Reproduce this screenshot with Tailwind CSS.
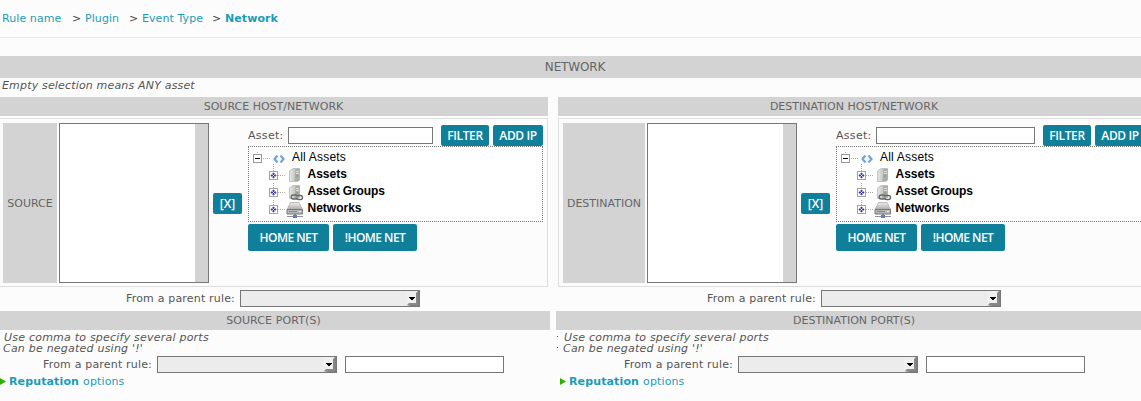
<!DOCTYPE html>
<html lang="en">
<head>
<meta charset="utf-8">
<title>Network</title>
<script src="https://cdn.jsdelivr.net/npm/@tailwindcss/browser@4"></script>
</head>
<body class="w-[1141px] h-[401px] overflow-hidden bg-[#fcfcfc] text-[#555] font-['DejaVu_Sans',sans-serif] text-[11px] leading-[11px]">
<svg class="absolute size-0">
  <defs>
    <linearGradient id="metal" x1="0" x2="1" y1="0" y2="0"><stop offset="0" stop-color="#e8e8e6"/><stop offset="1" stop-color="#a8aaa6"/></linearGradient>
    <linearGradient id="lid" x1="0" x2="0" y1="0" y2="1"><stop offset="0" stop-color="#eee"/><stop offset="1" stop-color="#aaa"/></linearGradient>
    <symbol id="root" viewBox="0 0 42 17">
      <path d="M8.500 3v2M14 9.500h7M24.500 15v2" stroke="#aaa" stroke-dasharray="1 1" fill="none"/>
      <rect x="4.500" y="5.500" width="8" height="8" fill="#fff" stroke="#9a9a8c"/>
      <path d="M6 9.500h5" stroke="#000"/>
      <path d="M28.500 6.500L25.500 10L28.500 13.500M31.500 6.500L34.500 10L31.500 13.500" stroke="#6fa6e0" stroke-width="2.200" fill="none"/>
    </symbol>
    <symbol id="plus" viewBox="0 0 58 17">
      <path d="M24.500 0v5M29 9.500h7" stroke="#aaa" stroke-dasharray="1 1" fill="none"/>
      <rect x="20.500" y="5.500" width="8" height="8" fill="#fff" stroke="#a5a59b"/>
      <path d="M24.500 6.500L27.500 9.500L24.500 12.500L21.500 9.500Z" fill="#3b34b0"/><rect x="24" y="9" width="1" height="1" fill="#fff"/><path d="M23.500 8v1M25.500 8v1M23.500 10v1M25.500 10v1" stroke="#b5b2e4"/>
    </symbol>
    <symbol id="server" viewBox="0 0 16 17">
      <path d="M1.500 5L5 2.500H11.500V14L9.500 15.500H1.500Z" fill="url(#metal)" stroke="#b8b8b4" stroke-width=".8"/>
      <path d="M6 4.500L7.500 3V14.500L6 15.500Z" fill="#c9cbc7"/><path d="M7.500 3H11.500V14L10 15H6.500Z" fill="#a9aca7"/>
      <path d="M8 5.500h3M8 7.500h3" stroke="#dededa"/><rect x="8.500" y="9" width="1.500" height="2" fill="#6fae6c"/>
    </symbol>
    <symbol id="chain" viewBox="0 0 16 17">
      <g fill="none" stroke="#666" stroke-width="1.400"><rect x="3.200" y="11" width="6" height="4" rx="2"/><rect x="8.500" y="11.500" width="6" height="4" rx="2"/><path d="M6.500 13.200h5" stroke="#aaa"/></g>
    </symbol>
    <symbol id="netdrive" viewBox="0 0 18 19">
      <path d="M4.500 2.500H13L16.500 9.500H1Z" fill="url(#lid)" stroke="#bbb"/>
      <path d="M1 9.500h15.500V14H1Z" fill="#b8b8b8" stroke="#777"/>
      <path d="M3 11.500h8" stroke="#888"/><path d="M13 11.500h2" stroke="#eee"/>
      <path d="M1 16.500h16" stroke="#8b93a2"/><path d="M9 14v2" stroke="#555"/><rect x="7" y="15" width="4" height="3" fill="#5c80c8"/>
    </symbol>
    <symbol id="arrow" viewBox="0 0 13 15">
      <path d="M0 0h13v15h-13Z" fill="#808080"/><path d="M0 0h12L10 13L0 15Z" fill="#efefef"/><path d="M10 2L12 0V14H1L3 12H10Z" fill="#888"/>
      <path d="M3 6h6v1h-1v1h-1v1h-2v-1h-1v-1h-1Z" fill="#000"/>
    </symbol>
  </defs>
</svg>

<nav class="flex h-[38px] items-center border-b border-[#e8e8e8] pl-[2px] text-[#1b9cb5] whitespace-nowrap tracking-[0.08px]">
  <a class="w-[70px]">Rule name</a><span class="w-[13px] text-[#444]">&gt;</span>
  <a class="w-[44px]">Plugin</a><span class="w-[13px] text-[#444]">&gt;</span>
  <a class="w-[70px]">Event Type</a><span class="w-[13px] text-[#444]">&gt;</span>
  <a class="font-bold">Network</a>
</nav>
<h1 class="mt-[18px] flex h-[22px] w-[1150px] items-center justify-center bg-[#d3d3d3] text-[12px] tracking-[-0.15px] text-[#666]">NETWORK</h1>
<p class="flex h-[19px] items-center pl-[2px] pb-[5px] italic tracking-[0.17px]">Empty selection means ANY asset</p>

<div class="flex w-[1150px] gap-[10px]">
  <section class="w-[548px]">
    <h2 class="flex h-[19px] items-center justify-center bg-[#d3d3d3] pr-px text-[#666]">SOURCE HOST/NETWORK</h2>
    <div class="mt-[2px] flex h-[169px] border border-l-0 border-[#ddd] pl-[3px] pt-1">
      <div class="flex h-[160px] w-[54px] items-center justify-center bg-[#d3d3d3] text-[#666]">SOURCE</div>
      <div class="ml-[2px] flex h-[160px] w-[150px] justify-end border border-[#777] bg-white"><div class="w-[13px] bg-[#d3d3d3]"></div></div>
      <button class="ml-1 mt-[70px] h-[21px] w-[29px] rounded-xs bg-[#10809a] font-['Open_Sans',sans-serif] text-[12px] font-semibold text-white">[X]</button>
      <div class="ml-[6px] mt-[2px] w-[295px]">
        <div class="flex h-[21px]">
          <label class="mt-[5px] w-10 tracking-[0.3px]">Asset:</label><div class="mt-[2px] h-[17px] w-[145px] border border-[#777] bg-white"></div>
          <button class="ml-2 w-[48px] rounded-xs bg-[#10809a] font-['Open_Sans',sans-serif] text-[12px] tracking-[-0.4px] font-semibold text-white">FILTER</button>
          <button class="ml-1 w-[50px] rounded-xs bg-[#10809a] font-['Open_Sans',sans-serif] text-[12px] tracking-[-0.4px] font-semibold text-white whitespace-nowrap">ADD IP</button>
        </div>
        <div class="h-[76px] border border-dotted border-[#777] bg-white pt-[2px] font-['Liberation_Sans',sans-serif] text-[12px] leading-[17px] text-black">
          <div class="flex h-[17px] tracking-[0.2px]"><svg class="mr-px h-[17px] w-[42px]"><use href="#root"/></svg>All Assets</div>
          <div class="flex h-[17px] font-bold"><svg class="mr-[0.5px] h-[17px] w-[58px]"><use href="#plus" width="58" height="17"/><use href="#server" x="39" width="16" height="17"/></svg>Assets</div>
          <div class="flex h-[17px] font-bold tracking-[-0.12px]"><svg class="mr-[0.5px] h-[17px] w-[58px] overflow-visible"><use href="#plus" width="58" height="17"/><use href="#server" x="39" width="16" height="17"/><use href="#chain" x="39" y="1" width="16" height="17"/></svg>Asset Groups</div>
          <div class="flex h-[17px] font-bold"><svg class="mr-[0.5px] h-[17px] w-[58px] overflow-visible"><use href="#plus" width="58" height="17"/><use href="#netdrive" x="37" width="18" height="19"/></svg>Networks</div>
        </div>
        <div class="mt-[2px] flex h-[27px] gap-1">
          <button class="w-[81px] rounded-xs bg-[#10809a] font-['Open_Sans',sans-serif] text-[12px] tracking-[-0.55px] font-semibold text-white">HOME NET</button>
          <button class="w-[84px] rounded-xs bg-[#10809a] font-['Open_Sans',sans-serif] text-[12px] tracking-[-0.55px] font-semibold text-white">!HOME NET</button>
        </div>
      </div>
    </div>
  </section>
  <section class="w-[592px]">
    <h2 class="flex h-[19px] items-center justify-center bg-[#d3d3d3] text-[#666]">DESTINATION HOST/NETWORK</h2>
    <div class="mt-[2px] flex h-[169px] border border-[#ddd] pl-1 pt-1">
      <div class="flex h-[160px] w-[82px] items-center justify-center bg-[#d3d3d3] text-[#666]">DESTINATION</div>
      <div class="ml-[2px] flex h-[160px] w-[150px] justify-end border border-[#777] bg-white"><div class="w-[13px] bg-[#d3d3d3]"></div></div>
      <button class="ml-1 mt-[70px] h-[21px] w-[29px] rounded-xs bg-[#10809a] font-['Open_Sans',sans-serif] text-[12px] font-semibold text-white">[X]</button>
      <div class="ml-[6px] mt-[2px] w-[309px]">
        <div class="flex h-[21px]">
          <label class="mt-[5px] w-10 tracking-[0.3px]">Asset:</label><div class="mt-[2px] h-[17px] w-[159px] border border-[#777] bg-white"></div>
          <button class="ml-2 w-[48px] rounded-xs bg-[#10809a] font-['Open_Sans',sans-serif] text-[12px] tracking-[-0.4px] font-semibold text-white">FILTER</button>
          <button class="ml-1 w-[50px] rounded-xs bg-[#10809a] font-['Open_Sans',sans-serif] text-[12px] tracking-[-0.4px] font-semibold text-white whitespace-nowrap">ADD IP</button>
        </div>
        <div class="h-[76px] border border-dotted border-[#777] bg-white pt-[2px] font-['Liberation_Sans',sans-serif] text-[12px] leading-[17px] text-black">
          <div class="flex h-[17px] tracking-[0.2px]"><svg class="mr-px h-[17px] w-[42px]"><use href="#root"/></svg>All Assets</div>
          <div class="flex h-[17px] font-bold"><svg class="mr-[0.5px] h-[17px] w-[58px]"><use href="#plus" width="58" height="17"/><use href="#server" x="39" width="16" height="17"/></svg>Assets</div>
          <div class="flex h-[17px] font-bold tracking-[-0.12px]"><svg class="mr-[0.5px] h-[17px] w-[58px] overflow-visible"><use href="#plus" width="58" height="17"/><use href="#server" x="39" width="16" height="17"/><use href="#chain" x="39" y="1" width="16" height="17"/></svg>Asset Groups</div>
          <div class="flex h-[17px] font-bold"><svg class="mr-[0.5px] h-[17px] w-[58px] overflow-visible"><use href="#plus" width="58" height="17"/><use href="#netdrive" x="37" width="18" height="19"/></svg>Networks</div>
        </div>
        <div class="mt-[2px] flex h-[27px] gap-1">
          <button class="w-[81px] rounded-xs bg-[#10809a] font-['Open_Sans',sans-serif] text-[12px] tracking-[-0.55px] font-semibold text-white">HOME NET</button>
          <button class="w-[84px] rounded-xs bg-[#10809a] font-['Open_Sans',sans-serif] text-[12px] tracking-[-0.55px] font-semibold text-white">!HOME NET</button>
        </div>
      </div>
    </div>
  </section>
</div>

<div class="flex w-[1150px] gap-[6px] whitespace-nowrap">
  <section class="w-[550px]">
    <div class="flex h-[24px] items-center pb-[2px] pl-[126px]">
      <label class="w-[114px] tracking-[0.18px]">From a parent rule:</label>
      <div class="flex h-[17px] w-[180px] justify-end border border-[#777] bg-[#ececec]"><svg class="h-[15px] w-[13px]"><use href="#arrow"/></svg></div>
    </div>
    <h2 class="flex h-[19px] items-center justify-center bg-[#d3d3d3] pr-[3px] text-[#666] tracking-[0.1px]">SOURCE PORT(S)</h2>
    <p class="pl-1 pt-[2px] italic tracking-[0.22px]">Use comma to specify several ports<br><span class="-ml-px">Can be negated using '!'</span></p>
    <div class="mt-px flex h-[18px] items-center pl-[43px]">
      <label class="w-[114px] tracking-[0.18px]">From a parent rule:</label>
      <div class="flex h-[17px] w-[180px] justify-end border border-[#777] bg-[#ececec]"><svg class="h-[15px] w-[13px]"><use href="#arrow"/></svg></div>
      <div class="ml-2 h-[17px] w-[159px] border border-[#777] bg-white"></div>
    </div>
    <div class="mt-[3px] flex items-center text-[#1b9cb5] tracking-[0.13px]"><svg class="mr-[3px] h-[7px] w-[6px]"><path d="M0 0L6 3.500L0 7Z" fill="#2db000"/></svg><b>Reputation</b><span class="ml-1">options</span></div>
  </section>
  <section class="w-[594px]">
    <div class="flex h-[24px] items-center pb-[2px] pl-[151px]">
      <label class="w-[114px] tracking-[0.18px]">From a parent rule:</label>
      <div class="flex h-[17px] w-[180px] justify-end border border-[#777] bg-[#ececec]"><svg class="h-[15px] w-[13px]"><use href="#arrow"/></svg></div>
    </div>
    <h2 class="flex h-[19px] items-center justify-center bg-[#d3d3d3] pl-[2px] text-[#666]">DESTINATION PORT(S)</h2>
    <div class="flex pt-[2px] italic tracking-[0.22px]"><svg class="h-[22px] w-2"><path d="M1 4h1v1h-1ZM1 15h1v1h-1Z" fill="#444"/><path d="M1 7h1v1h-1ZM1 18h1v1h-1Z" fill="#ddd"/></svg><p>Use comma to specify several ports<br><span class="-ml-px">Can be negated using '!'</span></p></div>
    <div class="mt-px flex h-[18px] items-center pl-[68px]">
      <label class="w-[114px] tracking-[0.18px]">From a parent rule:</label>
      <div class="flex h-[17px] w-[180px] justify-end border border-[#777] bg-[#ececec]"><svg class="h-[15px] w-[13px]"><use href="#arrow"/></svg></div>
      <div class="ml-2 h-[17px] w-[159px] border border-[#777] bg-white"></div>
    </div>
    <div class="mt-[3px] flex items-center pl-1 text-[#1b9cb5] tracking-[0.13px]"><svg class="mr-[3px] h-[7px] w-[6px]"><path d="M0 0L6 3.500L0 7Z" fill="#2db000"/></svg><b>Reputation</b><span class="ml-1">options</span></div>
  </section>
</div>
</body>
</html>
